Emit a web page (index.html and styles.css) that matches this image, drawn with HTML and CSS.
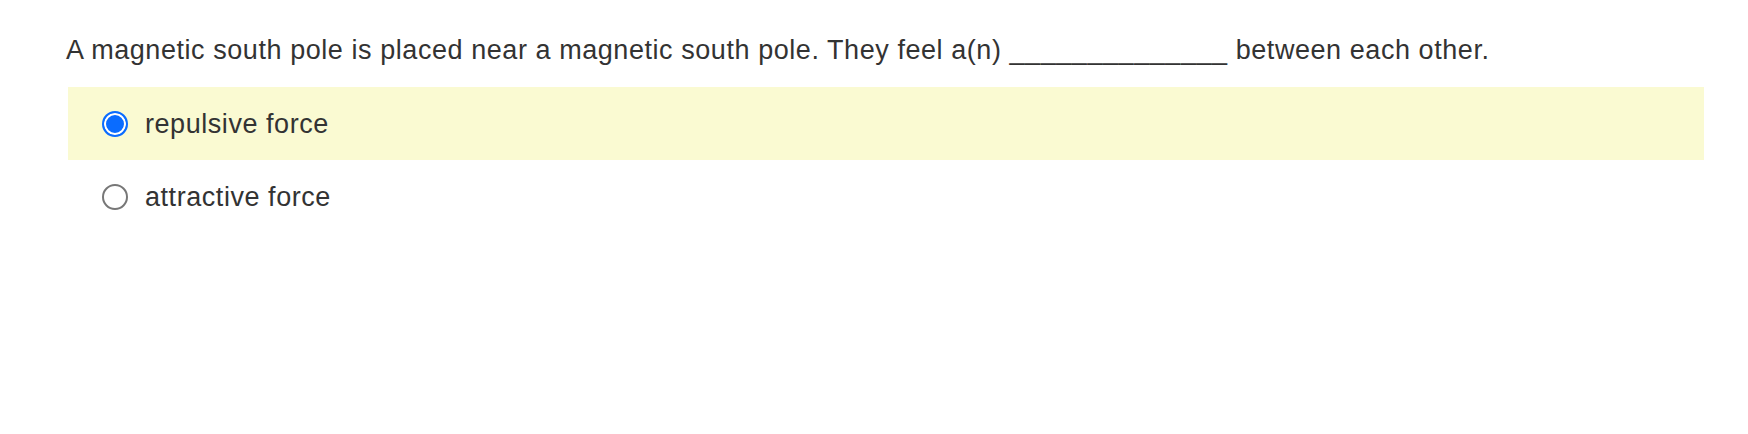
FILE: index.html
```html
<!DOCTYPE html>
<html lang="en">
<head>
	<meta charset="UTF-8">
	<title>Question</title>
	<link rel="stylesheet" href="styles.css">
</head>
<body>
<div class="quiz">
	<p class="question">A magnetic south pole is placed near a magnetic south pole. They feel a(n) ______________ between each other.</p>
	<ul class="answers">
		<li class="selected">
			<label><input type="radio" name="q1" checked><span>repulsive force</span></label>
		</li>
		<li>
			<label><input type="radio" name="q1"><span>attractive force</span></label>
		</li>
	</ul>
</div>
</body>
</html>
```

FILE: styles.css
```css
*{ padding: 0; margin: 0; }
li{ list-style-type: none; }
body{ background: #fff; font-family: "Liberation Sans", Arial, sans-serif; color: #333; }
.quiz{ padding: 32px 44px 0 66px; }
.question{ font-size: 27px; line-height: 36px; letter-spacing: 0.56px; margin-bottom: 19px; }
.answers{ margin-left: 2px; }
.answers li{ height: 73px; display: flex; align-items: center; padding-left: 34px; }
.answers li.selected{ background: #fafad2; }
.answers label{ display: flex; align-items: center; gap: 17px; font-size: 27px; letter-spacing: 0.55px; cursor: pointer; }
.answers label span{ padding-top: 2px; }
.answers input{ appearance: none; -webkit-appearance: none; width: 26px; height: 26px; border-radius: 50%; border: 2px solid #777; background: #fff; margin: 0; flex: none; }
.answers input:checked{ border-color: #0a6cff; background: #0a6cff; box-shadow: inset 0 0 0 2px #fff; }
```
